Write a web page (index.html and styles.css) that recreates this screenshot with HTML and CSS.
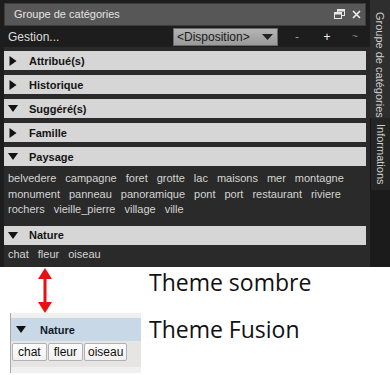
FILE: index.html
```html
<!DOCTYPE html>
<html lang="fr">
<head>
<meta charset="utf-8">
<title>Groupe de catégories</title>
<link rel="stylesheet" href="styles.css">
</head>
<body>
<div class="dock">
  <div class="panel">
    <div class="titlebar">
      <span class="title">Groupe de catégories</span>
      <span class="title-icons">
        <svg width="11" height="10" viewBox="0 0 11 10"><rect x="3.5" y="0.5" width="7" height="6" fill="none" stroke="#e8e8e8"/><rect x="3.5" y="0.5" width="7" height="2" fill="#e8e8e8"/><rect x="0.5" y="3.5" width="7" height="6" fill="#575757" stroke="#e8e8e8"/><rect x="0.5" y="3.5" width="7" height="2" fill="#e8e8e8"/></svg>
        <svg width="9" height="9" viewBox="0 0 9 9"><path d="M1 1L8 8M8 1L1 8" stroke="#f0f0f0" stroke-width="1.6"/></svg>
      </span>
    </div>
    <div class="toolbar">
      <span class="gestion">Gestion...</span>
      <div class="combo">
        <span>&lt;Disposition&gt;</span>
        <svg width="11" height="6" viewBox="0 0 11 6"><path d="M0 0H11L5.5 6Z" fill="#222"/></svg>
      </div>
      <span class="tool minus">-</span>
      <span class="tool plus">+</span>
      <span class="tool tilde">~</span>
    </div>
    <div class="content">
      <div class="section">
        <div class="header"><svg class="tri" width="9" height="10" viewBox="0 0 9 10"><path d="M1 0L8 5L1 10Z" fill="#111"/></svg><span>Attribué(s)</span></div>
      </div>
      <div class="section">
        <div class="header"><svg class="tri" width="9" height="10" viewBox="0 0 9 10"><path d="M1 0L8 5L1 10Z" fill="#111"/></svg><span>Historique</span></div>
      </div>
      <div class="section">
        <div class="header"><svg class="tri down" width="10" height="7" viewBox="0 0 10 7"><path d="M0 0H10L5 7Z" fill="#111"/></svg><span>Suggéré(s)</span></div>
      </div>
      <div class="section">
        <div class="header"><svg class="tri" width="9" height="10" viewBox="0 0 9 10"><path d="M1 0L8 5L1 10Z" fill="#111"/></svg><span>Famille</span></div>
      </div>
      <div class="section">
        <div class="header"><svg class="tri down" width="10" height="7" viewBox="0 0 10 7"><path d="M0 0H10L5 7Z" fill="#111"/></svg><span>Paysage</span></div>
        <div class="tags">
          <span>belvedere</span><span>campagne</span><span>foret</span><span>grotte</span><span>lac</span><span>maisons</span><span>mer</span><span>montagne</span>
          <span>monument</span><span>panneau</span><span>panoramique</span><span>pont</span><span>port</span><span>restaurant</span><span>riviere</span>
          <span>rochers</span><span>vieille_pierre</span><span>village</span><span>ville</span>
        </div>
      </div>
      <div class="section">
        <div class="header"><svg class="tri down" width="10" height="7" viewBox="0 0 10 7"><path d="M0 0H10L5 7Z" fill="#111"/></svg><span>Nature</span></div>
        <div class="tags last">
          <span>chat</span><span>fleur</span><span>oiseau</span>
        </div>
      </div>
    </div>
  </div>
  <div class="sidetabs">
    <div class="vtab first">Groupe de catégories</div>
    <div class="vtab second">Informations</div>
  </div>
</div>
<div class="below">
  <div class="left-col">
    <svg class="arrow" width="16" height="45" viewBox="0 0 16 45"><path d="M8 10V35" stroke="#e81010" stroke-width="3"/><path d="M8 0L15 11H1Z" fill="#e81010"/><path d="M8 45L15 34H1Z" fill="#e81010"/></svg>
    <div class="fusion">
      <div class="f-header"><svg width="10" height="7" viewBox="0 0 10 7"><path d="M0 0H10L5 7Z" fill="#111"/></svg><span>Nature</span></div>
      <div class="f-row">
        <span class="f-btn wide">chat</span><span class="f-btn wide">fleur</span><span class="f-btn">oiseau</span>
      </div>
    </div>
  </div>
  <div class="labels">
    <div class="label">Theme sombre</div>
    <div class="label">Theme Fusion</div>
  </div>
</div>
</body>
</html>
```

FILE: styles.css
```css
* { box-sizing: border-box; }
body {
  margin: 0;
  background: #ffffff;
  font-family: "Liberation Sans", Arial, sans-serif;
  font-size: 11px;
  width: 390px;
}
.dock {
  display: flex;
  height: 267px;
  background: #1d1d1d;
}
.panel {
  width: 370px;
  padding: 3px 4px 0 4px;
  display: flex;
  flex-direction: column;
}
.titlebar {
  height: 23px;
  background: #575757;
  border: 1px solid #3c3c3c;
  display: flex;
  align-items: center;
  justify-content: space-between;
  padding: 0 4px 0 9px;
  color: #e4e4e4;
  font-size: 11px;
}
.title-icons {
  display: flex;
  align-items: center;
  gap: 7px;
}
.toolbar {
  height: 21px;
  display: flex;
  align-items: center;
  color: #dedede;
  font-size: 12px;
  margin-top: 1px;
}
.gestion {
  width: 169px;
  flex: none;
  padding-left: 4px;
}
.combo {
  width: 105px;
  flex: none;
  height: 18px;
  background: linear-gradient(#b4b4b4, #9a9a9a);
  border: 1px solid #6a6a6a;
  display: flex;
  align-items: center;
  justify-content: space-between;
  padding: 0 4px 0 3px;
  color: #1a1a1a;
  font-size: 12px;
  margin-right: 4px;
}
.tool {
  width: 30px;
  flex: none;
  text-align: center;
  color: #9a9a9a;
}
.plus { color: #f0f0f0; }
.tilde { color: #8a8a8a; font-size: 10px; width: 26px; }
.content {
  flex: 1;
  background: #2a2a2a;
  padding-top: 4px;
  margin: 0 -4px 0 0;
  padding-right: 4px;
}
.section { margin-bottom: 5px; }
.header {
  height: 19px;
  background: #d6d6d6;
  display: flex;
  align-items: center;
  color: #141414;
  font-weight: bold;
  font-size: 11px;
}
.header .tri {
  margin-left: 4px;
  width: 10px;
  margin-right: 11px;
}
.tags {
  display: flex;
  flex-wrap: wrap;
  column-gap: 9px;
  padding: 5px 20px 3px 4px;
  color: #d4d4d4;
  font-size: 11px;
  line-height: 15.5px;
}
.tags.last { padding: 2px 4px 0 4px; }
.sidetabs {
  width: 20px;
  display: flex;
  flex-direction: column;
  background: #1b1b1b;
}
.vtab {
  writing-mode: vertical-rl;
  color: #cfcfcf;
  font-size: 11px;
  display: flex;
  align-items: center;
  justify-content: flex-start;
  width: 20px;
}
.vtab.first {
  height: 118px;
  background: #2e2e2e;
  padding-top: 12px;
}
.vtab.second {
  height: 72px;
  background: #252525;
  border-left: 1px solid #151515;
  padding-top: 6px;
}
.below {
  display: flex;
  height: 108px;
}
.left-col {
  width: 141px;
  padding-left: 7px;
  display: flex;
  flex-direction: column;
}
.arrow {
  margin-left: 30px;
  margin-top: 1px;
}
.fusion {
  height: 60px;
  background: #f0f0f0;
  border-left: 1px solid #a8a8a8;
  margin-left: 3px;
  padding-top: 5px;
}
.f-header {
  height: 23px;
  background: #c9d8e6;
  display: flex;
  align-items: center;
  font-weight: bold;
  color: #101828;
  font-size: 11px;
}
.f-header svg { margin-left: 5px; margin-right: 14px; }
.f-row {
  background: #e6e5e3;
  height: 26px;
  display: flex;
  gap: 1px;
  padding: 2px 0 0 1px;
}
.f-btn {
  height: 18px;
  background: linear-gradient(#fdfdfd, #f1f1f1);
  border: 1px solid #b2b2b2;
  border-radius: 2px;
  color: #101010;
  font-size: 12px;
  display: flex;
  align-items: center;
  padding: 0 3px;
}
.f-btn.wide { padding: 0 5px; }
.labels {
  padding-left: 8px;
  display: flex;
  flex-direction: column;
}
.label {
  font-family: "Open Sans", sans-serif;
  font-size: 23px;
  color: #111;
  line-height: 30px;
}
.label + .label { margin-top: 17px; }
```
